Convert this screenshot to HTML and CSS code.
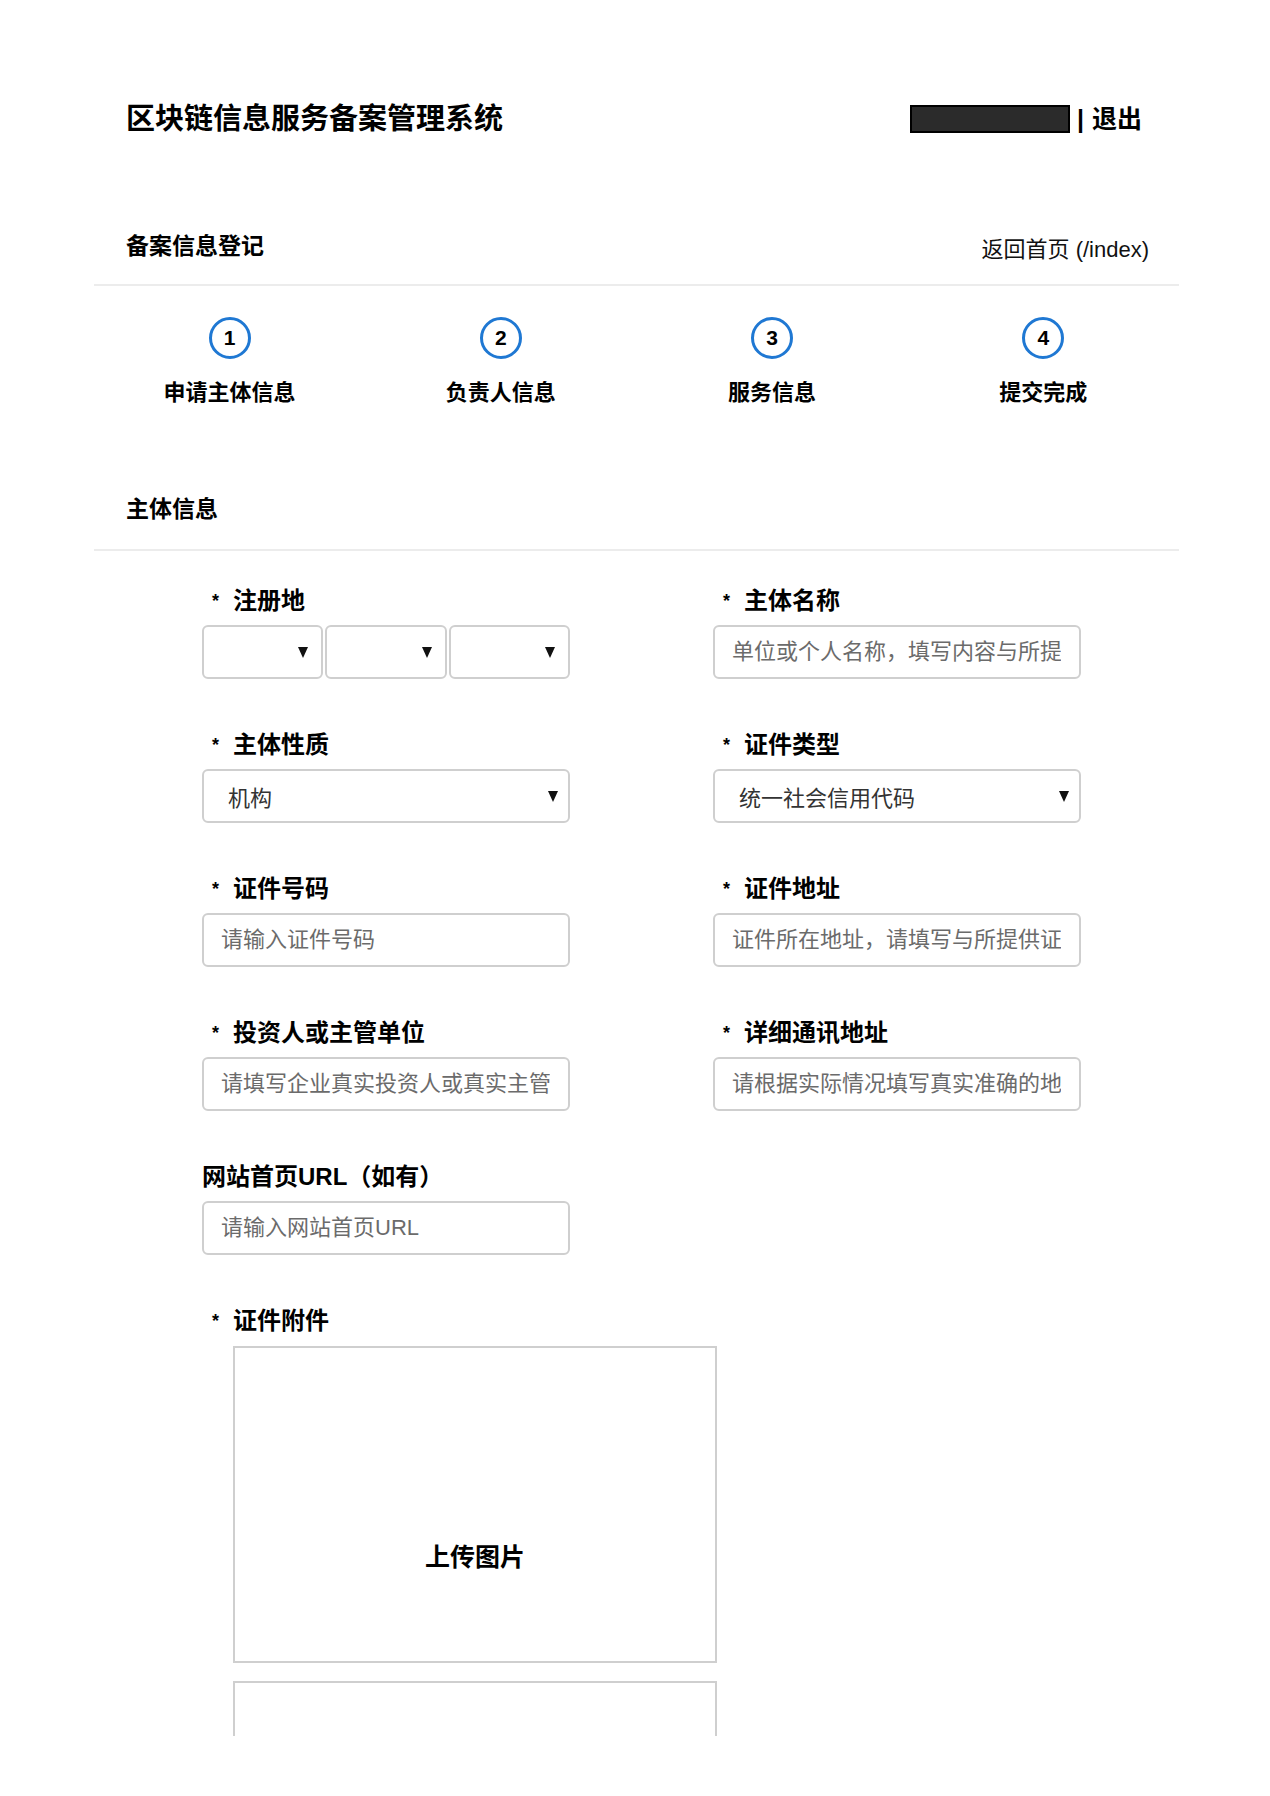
FILE: index.html
```html
<!DOCTYPE html>
<html lang="zh-CN">

<head>
    <meta charset="UTF-8">
    <meta name="viewport" content="width=device-width, initial-scale=1.0">
    <title>区块链信息服务备案管理系统</title>
    <link rel="stylesheet" href="styles.css">
</head>

<body>
    <div class="page">
        <!-- 顶部 -->
        <header class="topbar">
            <h1 class="site-title">区块链信息服务备案管理系统</h1>
            <div class="user-box">
                <span class="user-name"></span>
                <span class="sep">|</span>
                <a class="logout" href="#">退出</a>
            </div>
        </header>

        <div class="panel-head">
            <h2 class="panel-title">备案信息登记</h2>
            <a class="back-link" href="#">返回首页 (/index)</a>
        </div>

        <!-- 步骤 -->
        <ol class="steps">
            <li class="step"><span class="step-num">1</span><span class="step-label">申请主体信息</span></li>
            <li class="step"><span class="step-num">2</span><span class="step-label">负责人信息</span></li>
            <li class="step"><span class="step-num">3</span><span class="step-label">服务信息</span></li>
            <li class="step"><span class="step-num">4</span><span class="step-label">提交完成</span></li>
        </ol>

        <div class="section-head">主体信息</div>

        <!-- 表单 -->
        <form class="form-grid">
            <div class="field">
                <label class="field-label"><span class="star">*</span>注册地</label>
                <div class="region-selects">
                    <div class="select select-sm"><span></span><i class="arrow"></i></div>
                    <div class="select select-sm"><span></span><i class="arrow"></i></div>
                    <div class="select select-sm"><span></span><i class="arrow"></i></div>
                </div>
            </div>

            <div class="field">
                <label class="field-label"><span class="star">*</span>主体名称</label>
                <input class="text-input" type="text" placeholder="单位或个人名称，填写内容与所提供证件一致">
            </div>

            <div class="field">
                <label class="field-label"><span class="star">*</span>主体性质</label>
                <div class="select"><span>机构</span><i class="arrow"></i></div>
            </div>

            <div class="field">
                <label class="field-label"><span class="star">*</span>证件类型</label>
                <div class="select"><span>统一社会信用代码</span><i class="arrow"></i></div>
            </div>

            <div class="field">
                <label class="field-label"><span class="star">*</span>证件号码</label>
                <input class="text-input" type="text" placeholder="请输入证件号码">
            </div>

            <div class="field">
                <label class="field-label"><span class="star">*</span>证件地址</label>
                <input class="text-input" type="text" placeholder="证件所在地址，请填写与所提供证件一致的地址">
            </div>

            <div class="field">
                <label class="field-label"><span class="star">*</span>投资人或主管单位</label>
                <input class="text-input" type="text" placeholder="请填写企业真实投资人或真实主管单位">
            </div>

            <div class="field">
                <label class="field-label"><span class="star">*</span>详细通讯地址</label>
                <input class="text-input" type="text" placeholder="请根据实际情况填写真实准确的地址">
            </div>

            <div class="field field-first">
                <label class="field-label">网站首页URL（如有）</label>
                <input class="text-input" type="text" placeholder="请输入网站首页URL">
            </div>

            <div class="field field-wide">
                <label class="field-label"><span class="star">*</span>证件附件</label>
                <div class="upload-list">
                    <div class="upload-box">上传图片</div>
                    <div class="upload-box"></div>
                </div>
            </div>
        </form>
    </div>
</body>

</html>
```

FILE: styles.css
```css
:root {
    --text-color: #000000;
    --border-color: #cfcfcf;
    --line-color: #ececec;
    --step-color: #1f78d3;
}

body {
    margin: 0;
    background: #ffffff;
    color: var(--text-color);
    font-family: "Liberation Sans", "Noto Sans CJK SC", sans-serif;
}

a {
    color: inherit;
    text-decoration: none;
}

.page {
    width: 1085px;
    margin-left: 94px;
    padding-top: 99px;
    height: 1736px;
    box-sizing: border-box;
    overflow: hidden;
}

/* 顶部 */
.topbar {
    display: flex;
    justify-content: space-between;
    align-items: center;
    height: 40px;
    padding: 0 37px 0 32px;
}

.site-title {
    margin: 0;
    font-size: 29px;
    line-height: 40px;
    font-weight: bold;
}

.user-box {
    display: flex;
    align-items: center;
    font-size: 25px;
    font-weight: bold;
    line-height: 30px;
}

.user-name {
    width: 160px;
    height: 28px;
    box-sizing: border-box;
    background: #2b2b2b;
    border: 2px solid #000;
}

.sep {
    margin: 0 8px 0 7px;
}

.panel-head {
    display: flex;
    justify-content: space-between;
    align-items: center;
    margin-top: 92px;
    padding: 0 30px 23px 32px;
    border-bottom: 2px solid var(--line-color);
}

.panel-title {
    margin: 0;
    font-size: 23px;
    line-height: 24px;
    font-weight: bold;
}

.back-link {
    margin-top: 8px;
    font-size: 22px;
    line-height: 22px;
    color: #111;
}

/* 步骤 */
.steps {
    list-style: none;
    margin: 0;
    padding: 31px 0 0;
    display: grid;
    grid-template-columns: repeat(4, 1fr);
}

.step {
    display: flex;
    flex-direction: column;
    align-items: center;
}

.step-num {
    width: 42px;
    height: 42px;
    box-sizing: border-box;
    border: 3px solid var(--step-color);
    border-radius: 50%;
    display: flex;
    align-items: center;
    justify-content: center;
    font-size: 21px;
    font-weight: bold;
}

.step-label {
    margin-top: 23px;
    font-size: 22px;
    line-height: 22px;
    font-weight: bold;
}

.section-head {
    margin-top: 94px;
    padding: 0 32px 28px;
    font-size: 23px;
    line-height: 23px;
    font-weight: bold;
    border-bottom: 2px solid var(--line-color);
}

/* 表单 */
.form-grid {
    display: grid;
    grid-template-columns: 368px 368px;
    column-gap: 143px;
    row-gap: 54px;
    padding: 38px 0 0 108px;
    margin: 0;
}

.field-first {
    grid-column: 1;
}

.field-wide {
    grid-column: 1 / -1;
}

.field-label {
    display: flex;
    align-items: flex-start;
    height: 24px;
    margin-bottom: 12px;
    font-size: 24px;
    line-height: 24px;
    font-weight: bold;
}

.star {
    font-size: 18px;
    margin: 0 14px 0 10px;
}

.text-input {
    display: block;
    width: 100%;
    height: 54px;
    box-sizing: border-box;
    border: 2px solid var(--border-color);
    border-radius: 6px;
    padding: 0 18px 0 17px;
    font-family: "Liberation Sans", "Noto Sans CJK SC", sans-serif;
    font-size: 22px;
    color: #333;
    background: #fff;
    outline: none;
}

.text-input::placeholder {
    color: #6b6b6b;
}

.region-selects {
    display: grid;
    grid-template-columns: repeat(3, 1fr);
    gap: 2px;
}

.select {
    display: flex;
    align-items: center;
    justify-content: space-between;
    height: 54px;
    box-sizing: border-box;
    border: 2px solid var(--border-color);
    border-radius: 6px;
    padding: 0 10px 0 24px;
    font-size: 22px;
    color: #333;
}

.select-sm {
    padding-right: 13px;
}

.arrow {
    width: 0;
    height: 0;
    border-left: 5px solid transparent;
    border-right: 5px solid transparent;
    border-top: 11px solid #111;
}

/* 附件 */
.upload-list {
    display: flex;
    flex-direction: column;
    gap: 18px;
    width: 484px;
    margin-left: 31px;
    margin-top: -11px;
    padding-top: 12px;
}

.upload-box {
    height: 317px;
    box-sizing: border-box;
    border: 2px solid var(--border-color);
    padding-top: 196px;
    text-align: center;
    font-size: 25px;
    line-height: 26px;
    font-weight: bold;
}
```
